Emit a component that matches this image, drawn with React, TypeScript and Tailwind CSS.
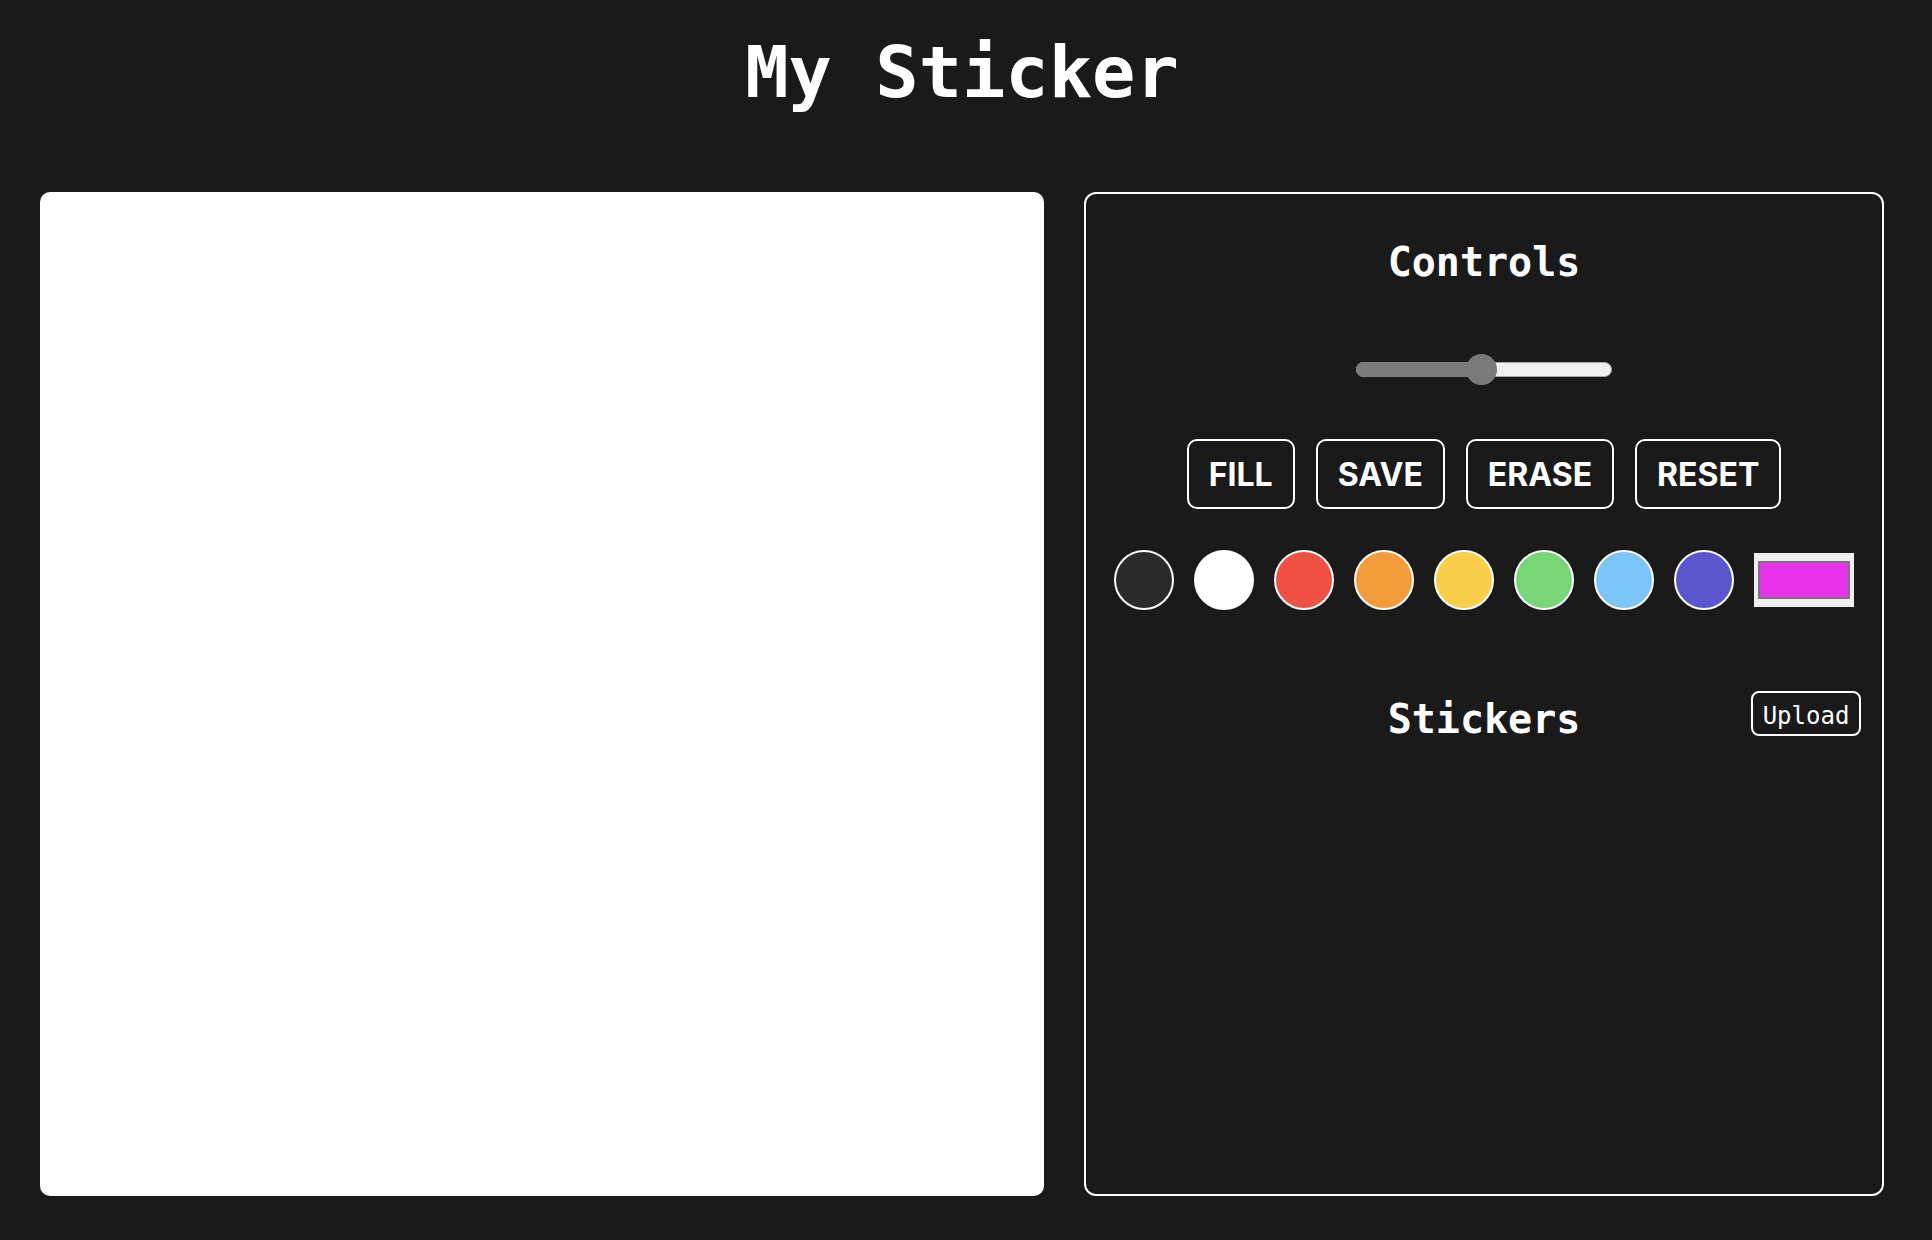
import { useState } from "react";

const COLORS = [
  "#2b2b2b",
  "#ffffff",
  "#ee5142",
  "#f39c3b",
  "#f8ce48",
  "#77d677",
  "#7bc5f6",
  "#5a57ce",
];

const ACTIONS = ["FILL", "SAVE", "ERASE", "RESET"];

function SizeSlider({ value }: { value: number }) {
  // track is 256 wide, thumb 31
  const fill = Math.round((value / 100) * 256);
  return (
    <div className="relative w-[256px] h-[31px] mt-[68px]">
      <div className="absolute left-0 right-0 top-[8px] h-[15px] rounded-full bg-[#efefef] border border-[#a9a9a9]" />
      <div
        className="absolute left-0 top-[8px] h-[15px] rounded-l-full bg-[#7a7a7a]"
        style={{ width: fill }}
      />
      <div
        className="absolute top-0 w-[31px] h-[31px] rounded-full bg-[#7a7a7a]"
        style={{ left: fill - 15.5 }}
      />
    </div>
  );
}

export default function App() {
  const [color, setColor] = useState("#e933ed");

  return (
    <div className="min-h-screen w-full bg-[#1a1a1a] text-white">
      <h1 className="pt-9 mb-[84px] pl-10 pr-12 text-center text-[72px] leading-none font-bold font-['DejaVu_Sans_Mono',monospace]">
        My Sticker
      </h1>
      <div className="flex gap-10 pl-10 pr-12">
        <div className="w-[1004px] h-[1004px] shrink-0 bg-white rounded-[10px]" />
        <div className="flex-1 h-[1004px] border-2 border-white rounded-[12px] flex flex-col items-center pt-[44px]">
          <h2 className="text-[40px] leading-[48px] font-bold font-['DejaVu_Sans_Mono',monospace]">
            Controls
          </h2>
          <SizeSlider value={49} />
          <div className="flex gap-[21px] mt-[54px]">
            {ACTIONS.map((a) => (
              <button
                key={a}
                className="h-[70px] px-[20px] pt-[2px] border-2 border-white rounded-[10px] bg-transparent text-white text-[32px] font-bold font-['Inter',sans-serif]"
              >
                {a}
              </button>
            ))}
          </div>
          <div className="flex items-center gap-5 mt-[41px]">
            {COLORS.map((c) => (
              <button
                key={c}
                className="w-[60px] h-[60px] rounded-full border-2 border-white"
                style={{ backgroundColor: c }}
              />
            ))}
            <div className="w-[100px] h-[54px] bg-[#efefef] px-1 py-2">
              <div
                className="w-full h-full border-2 border-[#777777]"
                style={{ backgroundColor: color }}
                onClick={() => setColor(color)}
              />
            </div>
          </div>
          <div className="relative w-full flex justify-center mt-[85px]">
            <h2 className="text-[40px] leading-[48px] font-bold font-['DejaVu_Sans_Mono',monospace]">
              Stickers
            </h2>
            <button className="absolute right-[21px] top-[-4px] w-[110px] h-[45px] pt-[5px] border-2 border-white rounded-[8px] text-[24px] leading-none font-['DejaVu_Sans_Mono',monospace]">
              Upload
            </button>
          </div>
        </div>
      </div>
    </div>
  );
}
